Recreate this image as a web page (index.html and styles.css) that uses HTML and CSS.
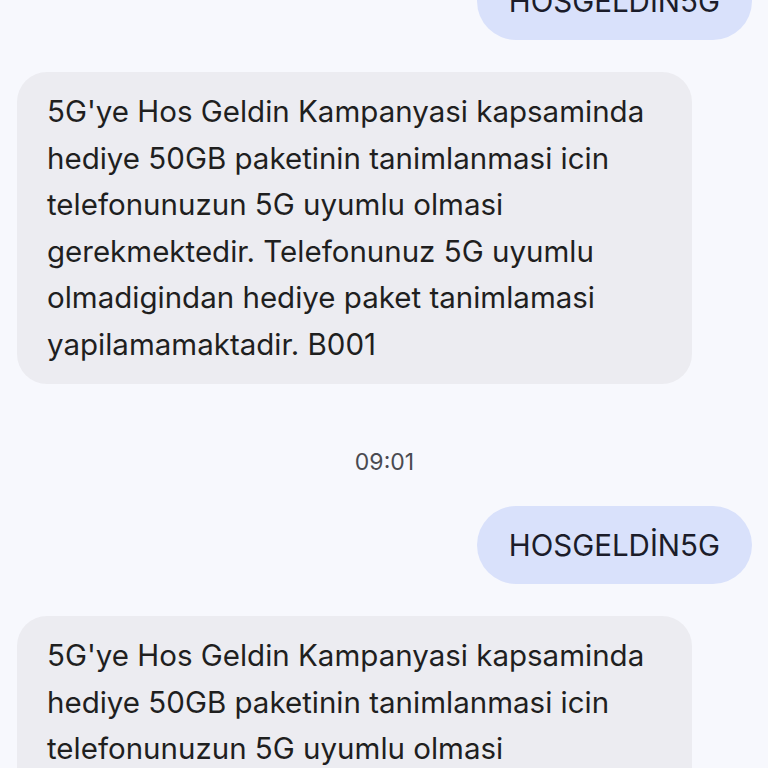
FILE: index.html
```html
<!DOCTYPE html>
<html lang="tr">
<head>
    <meta charset="UTF-8">
    <meta name="viewport" content="width=device-width, initial-scale=1.0">
    <title>Mesajlar</title>
    <link rel="stylesheet" href="styles.css">
</head>
<body>
    <div class="thread">
        <div class="msg sent">HOSGELDİN5G</div>

        <div class="msg received">5G'ye Hos Geldin Kampanyasi kapsaminda hediye 50GB paketinin tanimlanmasi icin telefonunuzun 5G uyumlu olmasi gerekmektedir. Telefonunuz 5G uyumlu olmadigindan hediye paket tanimlamasi yapilamamaktadir. B001</div>

        <div class="timestamp">09:01</div>

        <div class="msg sent">HOSGELDİN5G</div>

        <div class="msg received">5G'ye Hos Geldin Kampanyasi kapsaminda hediye 50GB paketinin tanimlanmasi icin telefonunuzun 5G uyumlu olmasi gerekmektedir. Telefonunuz 5G uyumlu olmadigindan hediye paket tanimlamasi yapilamamaktadir. B001</div>
    </div>
</body>
</html>
```

FILE: styles.css
```css
body {
    margin: 0;
    background: #f7f8fd;
    font-family: Inter, Roboto, "Noto Sans", Arial, sans-serif;
    color: #1f1f1f;
    overflow: hidden;
}

.thread {
    display: flex;
    flex-direction: column;
    padding: 0 16px 0 17px;
    margin-top: -38px;
}

.msg {
    font-size: 29.5px;
    line-height: 46.5px;
    box-sizing: border-box;
}

.sent {
    align-self: flex-end;
    background: #d9e1fb;
    color: #1b1c2a;
    border-radius: 39px;
    height: 78px;
    padding: 0 32px;
    display: flex;
    align-items: center;
}

.received {
    align-self: flex-start;
    max-width: 675px;
    background: #ececf1;
    border-radius: 30px;
    padding: 16px 30px 17px;
    margin-top: 32px;
}

.timestamp {
    text-align: center;
    font-size: 23px;
    color: #4a4a50;
    margin: 66px 0 32px;
    line-height: 24px;
}
```
